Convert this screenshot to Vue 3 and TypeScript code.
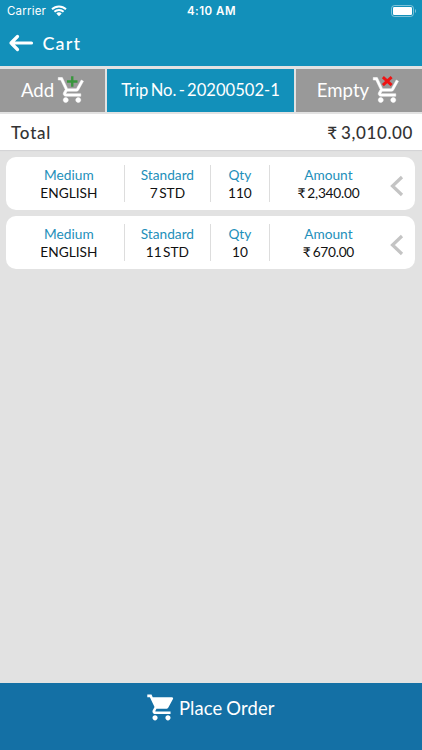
<script setup lang="ts">
interface CartItem {
  medium: string
  standard: string
  qty: number
  amount: string
}

const items: CartItem[] = [
  { medium: 'ENGLISH', standard: '7 STD', qty: 110, amount: '2,340.00' },
  { medium: 'ENGLISH', standard: '11 STD', qty: 10, amount: '670.00' },
]

const wheels =
  'M7 18c-1.1 0-1.99.9-1.99 2S5.9 22 7 22s2-.9 2-2-.9-2-2-2zm10 0c-1.1 0-1.99.9-1.99 2s.89 2 1.99 2 2-.9 2-2-.9-2-2-2z'
const openCart =
  'M7.17 14.75l.03-.12.9-1.63h7.45c.75 0 1.41-.41 1.75-1.03l3.86-7.01L19.42 4h-.01l-1.1 2-2.76 5H8.53l-.13-.27L6.16 6l-.95-2-.94-2H1v2h2l3.6 7.59-1.35 2.45c-.16.28-.25.61-.25.96 0 1.1.9 2 2 2h12v-2H7.42c-.13 0-.25-.11-.25-.25z'
const fullCart =
  'M1 2v2h2l3.6 7.59-1.35 2.45c-.16.28-.25.61-.25.96 0 1.1.9 2 2 2h12v-2H7.42c-.14 0-.25-.11-.25-.25l.03-.12.9-1.63h7.45c.75 0 1.41-.41 1.75-1.03l3.58-6.49c.08-.14.12-.31.12-.48 0-.55-.45-1-1-1H5.21l-.94-2H1z'
</script>

<template>
  <div class="screen">
    <header class="header">
      <div class="status">
        <div class="carrier">
          <span>Carrier</span>
          <svg class="wifi" viewBox="0 0 16 12">
            <path d="M1 4.3a10 10 0 0 1 14 0M3.4 6.8a6.6 6.6 0 0 1 9.2 0" fill="none" stroke="#fff" stroke-width="1.9" />
            <path d="M8 11.3L5.3 8.6a3.9 3.9 0 0 1 5.4 0z" fill="#fff" />
          </svg>
        </div>
        <span class="time">4:10 AM</span>
        <div class="power">
          <svg class="battery" viewBox="0 0 26 12">
            <rect x=".5" y=".5" width="22" height="11" rx="3" fill="none" stroke="#fff" stroke-opacity=".45" />
            <rect x="2" y="2" width="19" height="8" rx="1.2" fill="#fff" />
            <path d="M24 4v4c1.3-.6 1.3-3.4 0-4z" fill="#fff" fill-opacity=".5" />
          </svg>
        </div>
      </div>
      <div class="title">
        <svg class="back" viewBox="0 0 26 20">
          <path d="M23.5 10H3M9.5 3.5L3 10l6.5 6.5" fill="none" stroke="#fff" stroke-width="3.2" stroke-linecap="round" stroke-linejoin="round" />
        </svg>
        <h1>Cart</h1>
      </div>
    </header>

    <nav class="tabs">
      <button class="tab add">
        <span>Add</span>
        <svg class="cart" viewBox="0 0 24 24">
          <path class="bold" :d="wheels" />
          <path class="bold" :d="openCart" />
          <path d="M12.2 1v8.4M8 5.2h8.4" stroke="#38963c" stroke-width="1.9" />
        </svg>
      </button>
      <div class="tab trip"><span>Trip No. - 20200502-1</span></div>
      <button class="tab empty">
        <span>Empty</span>
        <svg class="cart" viewBox="0 0 24 24">
          <path class="bold" :d="wheels" />
          <path class="bold" :d="openCart" />
          <path d="M8.7 1.7l7 6.4M15.7 1.7l-7 6.4" stroke="#ee1414" stroke-width="2.3" />
        </svg>
      </button>
    </nav>

    <div class="total"><span>Total</span><span class="sum">₹ 3,010.00</span></div>

    <main class="list">
      <article v-for="item in items" :key="item.standard" class="card">
        <div class="cell"><span class="label">Medium</span><span>{{ item.medium }}</span></div>
        <div class="cell"><span class="label">Standard</span><span class="standard">{{ item.standard }}</span></div>
        <div class="cell"><span class="label">Qty</span><span>{{ item.qty }}</span></div>
        <div class="cell"><span class="label">Amount</span><span class="amount">₹ {{ item.amount }}</span></div>
        <svg class="chevron" viewBox="0 0 14 22">
          <path d="M12 2L2.5 11 12 20" fill="none" stroke="#c4c4c4" stroke-width="3.2" />
        </svg>
      </article>
    </main>

    <button class="order">
      <svg class="order-cart" viewBox="0 0 24 24">
        <path :d="wheels" fill="#fff" />
        <path :d="fullCart" fill="#fff" />
      </svg>
      <span>Place Order</span>
    </button>
  </div>
</template>

<style>
body {
  margin: 0;
}
</style>

<style scoped>
.screen {
  display: flex;
  flex-direction: column;
  height: 750px;
  overflow: hidden;
  background: #e2e2e2;
  font-family: Lato, 'Noto Sans', sans-serif;
  color: #111;
}
button {
  border: 0;
  padding: 0;
  font: inherit;
}
svg {
  display: block;
  flex: none;
}
.header {
  height: 65.5px;
  flex: none;
  background: #1290ba;
  color: #fff;
}
.status {
  display: grid;
  grid-template-columns: 1fr auto 1fr;
  align-items: center;
  height: 22px;
  padding: 0 5px 0 7px;
  font: 11.5px/22px Inter, sans-serif;
}
.carrier {
  display: flex;
  align-items: center;
  gap: 5px;
  letter-spacing: 0.2px;
}
.wifi {
  width: 16px;
  height: 12px;
}
.time {
  margin-right: 1px;
  font-weight: 600;
  letter-spacing: 0.5px;
}
.power {
  display: flex;
  justify-content: flex-end;
}
.battery {
  width: 26px;
  height: 12px;
}
.title {
  display: flex;
  align-items: center;
  gap: 9px;
  height: 42px;
  padding-left: 7.5px;
}
.back {
  width: 26px;
  height: 20px;
}
h1 {
  margin: 0;
  font-size: 18px;
  font-weight: 500;
  letter-spacing: 1.1px;
}
.tabs {
  display: grid;
  grid-template-columns: 105px 187px 1fr;
  gap: 2px;
  height: 43px;
  flex: none;
  margin-top: 3px;
}
.tab {
  display: flex;
  align-items: center;
  justify-content: center;
  gap: 3px;
  background: #999;
  color: #fff;
  font-size: 18.6px;
}
.tab span {
  margin-top: -1px;
}
.add {
  padding-left: 3px;
}
.empty {
  padding-left: 1px;
}
.trip {
  background: #1290ba;
  font-size: 16.6px;
  word-spacing: -2px;
}
.cart {
  width: 30px;
  height: 30px;
}
.bold {
  fill: #fff;
  stroke: #fff;
  stroke-width: 0.4;
  stroke-linejoin: round;
}
.total {
  display: flex;
  align-items: center;
  justify-content: space-between;
  height: 36px;
  flex: none;
  margin-top: 2.5px;
  padding: 1px 9px 0 11px;
  box-sizing: border-box;
  background: #fff;
  box-shadow: 0 1px 1px #d4d4d6;
  color: #333;
  font-size: 17px;
  font-weight: 500;
  letter-spacing: 0.8px;
}
.sum {
  letter-spacing: 0.6px;
  word-spacing: -1.5px;
}
.list {
  flex: 1;
  display: flex;
  flex-direction: column;
  gap: 6px;
  padding: 7px 7px 0 6.4px;
}
.card {
  display: grid;
  grid-template-columns: 111px 86px 59px 117px auto;
  align-items: center;
  height: 53px;
  padding-left: 7.5px;
  border-radius: 10px;
  background: #fff;
}
.cell {
  display: flex;
  flex-direction: column;
  align-items: center;
  box-sizing: border-box;
  height: 37px;
  padding-top: 0.5px;
  border-right: 1px solid #ddd;
  font-size: 13.7px;
  line-height: 18.5px;
  white-space: nowrap;
}
.cell:nth-child(4) {
  border-right: 0;
}
.label {
  color: #238fba;
}
.standard {
  word-spacing: -2px;
}
.amount {
  word-spacing: -1px;
  letter-spacing: -0.25px;
}
.chevron {
  width: 14px;
  height: 22px;
  margin-left: 3px;
  margin-top: 4px;
}
.order {
  display: flex;
  align-items: flex-start;
  justify-content: center;
  gap: 2px;
  height: 67px;
  flex: none;
  padding: 9px 1.5px 0 0;
  box-sizing: border-box;
  background: #1470a5;
  color: #fff;
  font-size: 18.4px;
  line-height: 32px;
  letter-spacing: 0.15px;
  word-spacing: -1px;
}
.order-cart {
  width: 31px;
  height: 31px;
}
</style>
